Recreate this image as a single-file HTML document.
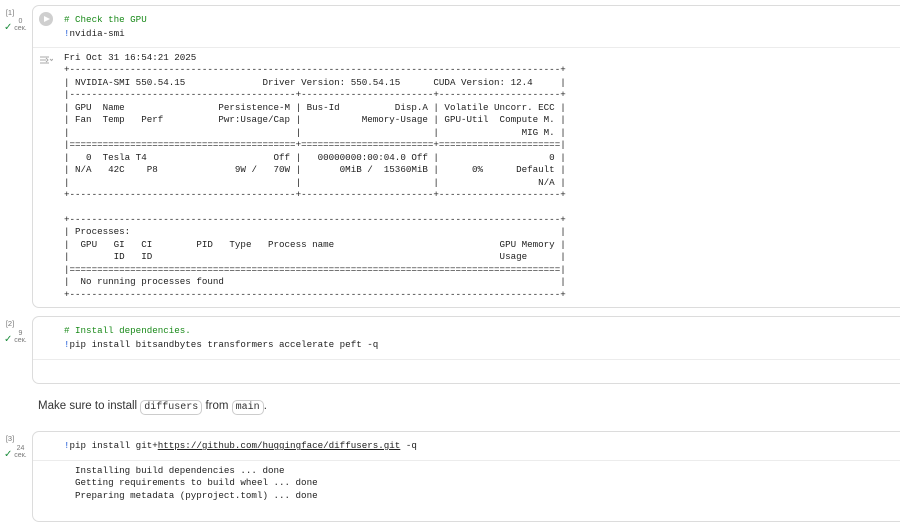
<!DOCTYPE html>
<html><head><meta charset="utf-8"><style>
body{margin:0;width:900px;height:523px;background:#fff;overflow:hidden;position:relative;font-family:"Liberation Sans",sans-serif}
.card{position:absolute;left:32px;width:880px;border:1px solid #dcdcdc;border-radius:7px;background:#fff;box-sizing:border-box}
.in{position:relative;border-bottom:1px solid #ececec}
pre{margin:0;font-family:"Liberation Mono",monospace;font-size:9.2px;color:#212121}
.code{position:absolute;left:31px;line-height:14px;top:7px}
.out{position:absolute;left:31px;line-height:12.45px;color:#222}
.c{color:#1a8a1a}.b{color:#1a57d6}
.gut{position:absolute;font-size:7px;color:#777;text-align:right;width:17px}
.chk{position:absolute;color:#1e8e3e;font-size:10px;left:4px}
.play{position:absolute;left:6px;top:6px;width:14px;height:14px;border-radius:50%;background:#cfcfcf}
.play:after{content:"";position:absolute;left:5px;top:3.5px;border-left:6px solid #fff;border-top:3.5px solid transparent;border-bottom:3.5px solid transparent}
.cd{font-family:"Liberation Mono",monospace;font-size:10px;border:1px solid #ccc;border-radius:5px;padding:1px 3px}
</style></head><body>

<div class="gut" style="left:0;width:20px;text-align:center;top:8px;font-size:7.5px">[1]</div>
<div class="gut" style="left:12px;top:18px;text-align:center">0<br>сек.</div>
<div class="chk" style="top:22px">✓</div>
<div class="card" style="top:5px;height:303px">
 <div class="in" style="height:41px"><div class="play"></div>
 <pre class="code"><span class="c"># Check the GPU</span>
<span class="b">!</span>nvidia-smi</pre></div>
 <svg style="position:absolute;left:6px;top:49px" width="14" height="10"><path d="M1 2h9M1 5h6M1 8h9M7 3l2 2-2 2M11 4l1.5 1.5L14 4" stroke="#aaa" fill="none" stroke-width="1"/></svg>
 <pre class="out" style="top:46px">Fri Oct 31 16:54:21 2025
+-----------------------------------------------------------------------------------------+
| NVIDIA-SMI 550.54.15              Driver Version: 550.54.15      CUDA Version: 12.4     |
|-----------------------------------------+------------------------+----------------------+
| GPU  Name                 Persistence-M | Bus-Id          Disp.A | Volatile Uncorr. ECC |
| Fan  Temp   Perf          Pwr:Usage/Cap |           Memory-Usage | GPU-Util  Compute M. |
|                                         |                        |               MIG M. |
|=========================================+========================+======================|
|   0  Tesla T4                       Off |   00000000:00:04.0 Off |                    0 |
| N/A   42C    P8              9W /   70W |       0MiB /  15360MiB |      0%      Default |
|                                         |                        |                  N/A |
+-----------------------------------------+------------------------+----------------------+

+-----------------------------------------------------------------------------------------+
| Processes:                                                                              |
|  GPU   GI   CI        PID   Type   Process name                              GPU Memory |
|        ID   ID                                                               Usage      |
|=========================================================================================|
|  No running processes found                                                             |
+-----------------------------------------------------------------------------------------+</pre>
</div>

<div class="gut" style="left:0;width:20px;text-align:center;top:319px;font-size:7.5px">[2]</div>
<div class="gut" style="left:12px;top:330px;text-align:center">9<br>сек.</div>
<div class="chk" style="top:334px">✓</div>
<div class="card" style="top:316px;height:68px">
 <div class="in" style="height:42px">
 <pre class="code"><span class="c"># Install dependencies.</span>
<span class="b">!</span>pip install bitsandbytes transformers accelerate peft -q</pre></div>
</div>

<div style="position:absolute;left:38px;top:400px;font-size:11.5px;color:#333">Make sure to install <span class="cd">diffusers</span> from <span class="cd">main</span>.</div>

<div class="gut" style="left:0;width:20px;text-align:center;top:434px;font-size:7.5px">[3]</div>
<div class="gut" style="left:12px;top:445px;text-align:center">24<br>сек.</div>
<div class="chk" style="top:449px">✓</div>
<div class="card" style="top:431px;height:91px">
 <div class="in" style="height:28px">
 <pre class="code" style="top:7px"><span class="b">!</span>pip install git+<span style="text-decoration:underline">https://github.com/huggingface/diffusers.git</span> -q</pre></div>
 <pre class="out" style="top:33px;left:42px">Installing build dependencies ... done
Getting requirements to build wheel ... done
Preparing metadata (pyproject.toml) ... done</pre>
</div>
</body></html>
